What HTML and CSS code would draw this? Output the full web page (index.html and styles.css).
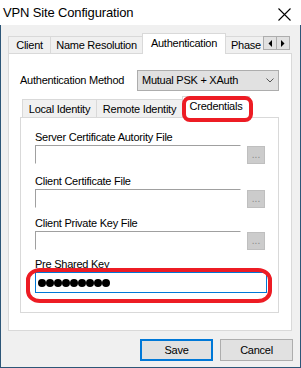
FILE: index.html
```html
<!DOCTYPE html>
<html lang="en">
<head>
<meta charset="utf-8">
<title>VPN Site Configuration</title>
<link rel="stylesheet" href="styles.css">
</head>
<body>
<div class="window">
  <div class="titlebar">
    <span class="title">VPN Site Configuration</span>
    <svg class="close" width="13" height="13" viewBox="0 0 13 13"><path d="M0.5 0.5 L12.5 12.5 M12.5 0.5 L0.5 12.5" stroke="#000" stroke-width="1.1" fill="none"/></svg>
  </div>
  <div class="client">
    <div class="tabstrip outer">
      <div class="tab t-client">Client</div>
      <div class="tab t-name">Name Resolution</div>
      <div class="tab active t-auth">Authentication</div>
      <div class="tab t-phase">Phase</div>
      <div class="spin">
        <span class="spinbtn"><svg width="4" height="7" viewBox="0 0 4 7"><path d="M4 0 L0.5 3.5 L4 7 Z" fill="#000"/></svg></span>
        <span class="spinbtn"><svg width="4" height="7" viewBox="0 0 4 7"><path d="M0 0 L3.5 3.5 L0 7 Z" fill="#000"/></svg></span>
      </div>
    </div>
    <div class="panel">
      <div class="method">
        <span class="label">Authentication Method</span>
        <div class="select">
          <span>Mutual PSK + XAuth</span>
          <svg width="8" height="5" viewBox="0 0 8 5"><path d="M0.5 0.5 L4 4 L7.5 0.5" stroke="#555" stroke-width="1" fill="none"/></svg>
        </div>
      </div>
      <div class="tabstrip inner">
        <div class="tab t-local">Local Identity</div>
        <div class="tab t-remote">Remote Identity</div>
        <div class="tab active t-cred">Credentials</div>
      </div>
      <div class="subpanel">
        <div class="field">
          <span class="label">Server Certificate Autority File</span>
          <div class="filerow"><div class="textbox"></div><div class="browse">...</div></div>
        </div>
        <div class="field f2">
          <span class="label">Client Certificate File</span>
          <div class="filerow"><div class="textbox"></div><div class="browse">...</div></div>
        </div>
        <div class="field f3">
          <span class="label">Client Private Key File</span>
          <div class="filerow"><div class="textbox"></div><div class="browse">...</div></div>
        </div>
        <div class="field f4">
          <span class="label">Pre Shared Key</span>
          <div class="password">
            <span class="dot"></span><span class="dot"></span><span class="dot"></span>
            <span class="dot"></span><span class="dot"></span><span class="dot"></span>
            <span class="dot"></span><span class="dot"></span><span class="dot"></span>
          </div>
        </div>
      </div>
    </div>
    <div class="actions">
      <button class="btn default">Save</button>
      <button class="btn">Cancel</button>
    </div>
  </div>
  <div class="mark mark-tab"></div>
  <div class="mark mark-psk"></div>
</div>
</body>
</html>
```

FILE: styles.css
```css
* { box-sizing: border-box; }
html, body { margin: 0; padding: 0; }
body {
  width: 301px;
  height: 368px;
  overflow: hidden;
  background: #f0f0f0;
  color: #000;
  font-family: "Liberation Sans", Arial, sans-serif;
  font-size: 11px;
  line-height: 13px;
  letter-spacing: -0.25px;
}
.window {
  position: relative;
  width: 301px;
  height: 368px;
  display: flex;
  flex-direction: column;
}
.titlebar {
  height: 25px;
  flex: none;
  background: #fff;
  display: flex;
  align-items: center;
  justify-content: space-between;
  padding: 1px 10px 0 3px;
}
.title { font-size: 13px; letter-spacing: -0.15px; line-height: 16px; }
.close { display: block; margin-top: 2px; }

.client {
  flex: 1;
  background: #f0f0f0;
  border: 1px solid #2d5678;
  border-top: 0;
  padding: 8px 8px 0 7px;
  display: flex;
  flex-direction: column;
}

/* tabs */
.tabstrip {
  display: flex;
  align-items: flex-end;
  position: relative;
  z-index: 1;
  flex: none;
}
.tabstrip.outer { height: 20px; }
.tab {
  border: 1px solid #d9d9d9;
  border-bottom: 0;
  background: #f0f0f0;
  white-space: nowrap;
  text-align: center;
  overflow: hidden;
}
.tab + .tab { margin-left: -1px; }
.outer .tab { height: 17px; padding-top: 2px; }
.outer .tab.active { height: 21px; padding-top: 3px; margin-bottom: -1px; background: #fff; position: relative; }
.t-client { width: 43px; }
.t-name { width: 93px; }
.t-auth { width: 84px; }
.t-phase { flex: 1; text-align: left; padding-left: 5px; border-right: 0; }
.spin {
  display: flex;
  align-self: flex-start;
  margin-top: 3px;
  margin-right: 2px;
}
.spinbtn {
  width: 14px;
  height: 14px;
  border: 1px solid #adadad;
  background: #e1e1e1;
  display: flex;
  align-items: center;
  justify-content: center;
}
.spinbtn + .spinbtn { margin-left: -1px; }
.spinbtn svg { display: block; }

.panel {
  height: 278px;
  flex: none;
  background: #fff;
  border: 1px solid #d9d9d9;
  padding: 16px 12px 0 11px;
  display: flex;
  flex-direction: column;
}
.method {
  height: 21px;
  display: flex;
  align-items: center;
  justify-content: space-between;
}
.select {
  width: 142px;
  height: 21px;
  border: 1px solid #adadad;
  background: #e1e1e1;
  display: flex;
  align-items: center;
  justify-content: space-between;
  padding: 0 4px 0 4px;
}
.select svg { display: block; }

.tabstrip.inner { height: 21px; margin-top: 5px; padding-left: 2px; }
.inner .tab { height: 18px; padding-top: 3px; }
.inner .tab.active { height: 22px; padding-top: 3px; margin-bottom: -1px; background: #fff; position: relative; }
.t-local { width: 75px; }
.t-remote { width: 87px; }
.t-cred { width: 68px; }

.subpanel {
  height: 196px;
  flex: none;
  border: 1px solid #d9d9d9;
  background: #fff;
  padding: 13px 10px 0 14px;
  display: flex;
  flex-direction: column;
}
.field { display: flex; flex-direction: column; gap: 1px; }
.field.f2 { margin-top: 11px; }
.field.f3 { margin-top: 9px; }
.field.f4 { margin-top: 8px; }
.label { display: block; white-space: nowrap; }
.filerow { display: flex; align-items: flex-start; gap: 6px; }
.textbox {
  width: 206px;
  height: 19px;
  border: 1px solid;
  border-color: #a0a0a0 #fff #fff #a0a0a0;
  background: #fff;
}
.browse {
  width: 18px;
  height: 18px;
  margin-top: 1px;
  background: #cccccc;
  border: 1px solid #bfbfbf;
  color: #8a8a8a;
  font-size: 10px;
  line-height: 10px;
  display: flex;
  justify-content: center;
  align-items: flex-end;
  padding-bottom: 3px;
  letter-spacing: 0;
}
.password {
  width: 232px;
  height: 21px;
  border: 1px solid #0078d7;
  display: flex;
  align-items: center;
  gap: 0;
  padding-left: 2px;
}
.dot {
  width: 8px;
  height: 8px;
  border-radius: 50%;
  background: #000;
}

.actions {
  display: flex;
  justify-content: flex-end;
  gap: 7px;
  margin-top: 8px;
  margin-right: -1px;
}
.btn {
  width: 73px;
  height: 22px;
  margin: 0;
  font: inherit;
  letter-spacing: inherit;
  color: #000;
  background: #e1e1e1;
  border: 1px solid #adadad;
  padding: 0;
}
.btn.default { border: 2px solid #0078d7; }

.mark {
  position: absolute;
  border: 4px solid #ed1c24;
  pointer-events: none;
  z-index: 5;
}
.mark-tab { left: 182px; top: 96px; width: 71px; height: 26px; border-radius: 8px; }
.mark-psk { left: 26px; top: 268px; width: 246px; height: 35px; border-radius: 14px / 12px; }
```
